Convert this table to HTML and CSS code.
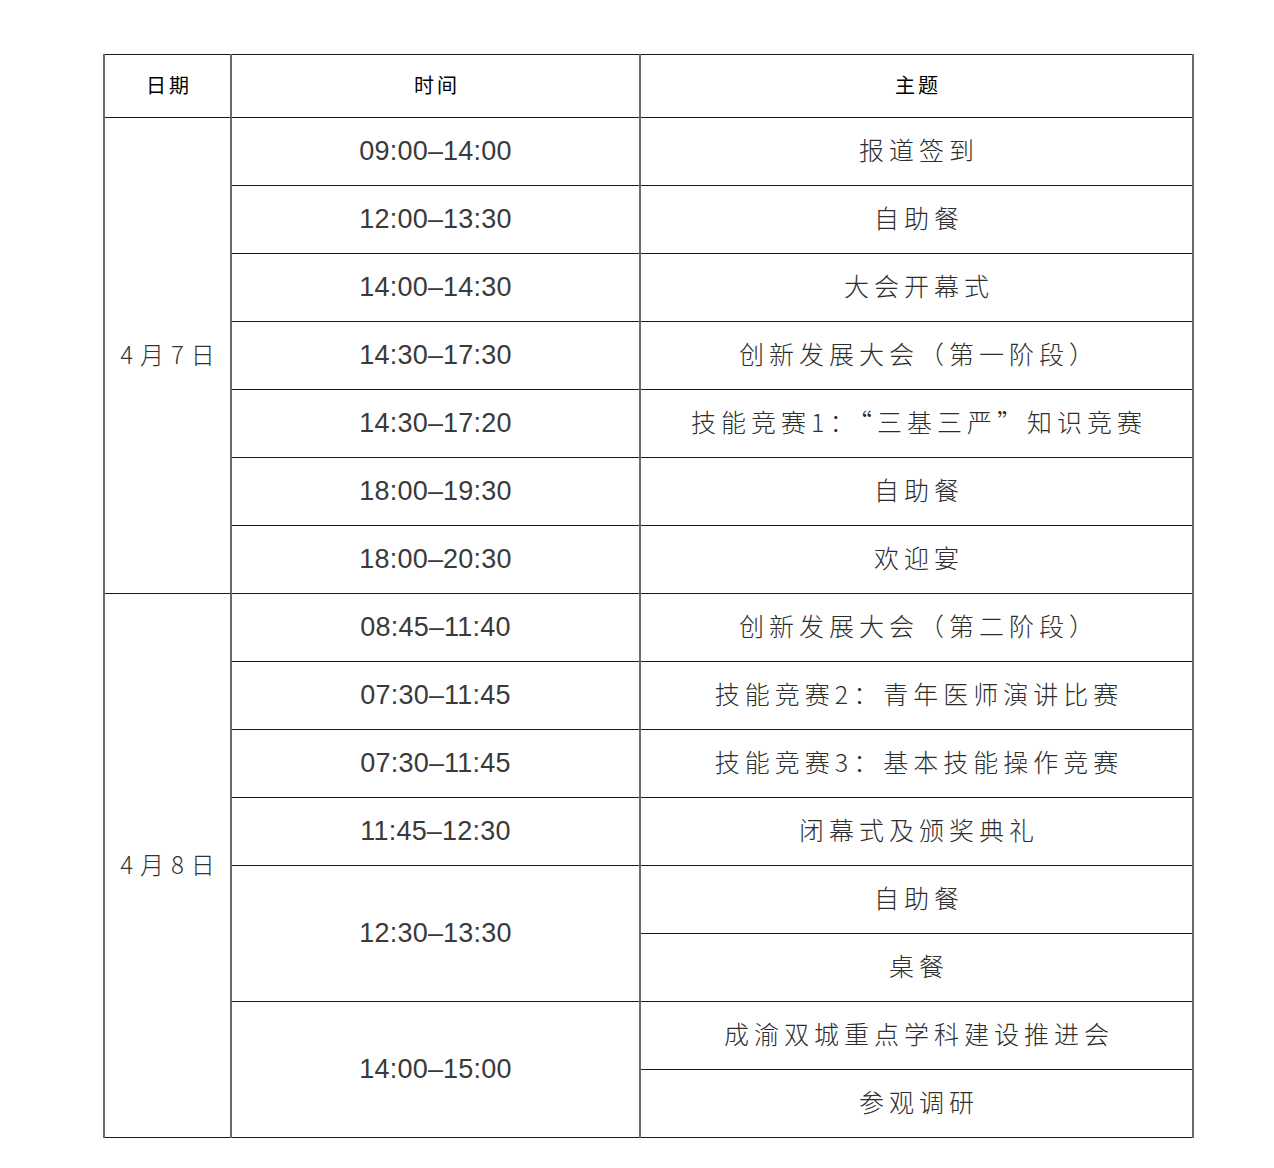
FILE: index.html
```html
<!DOCTYPE html>
<html lang="zh-CN">
<head>
<meta charset="utf-8">
<title>日程安排</title>
<link rel="stylesheet" href="styles.css">
</head>
<body>
<table class="schedule">
  <colgroup>
    <col class="c-date">
    <col class="c-time">
    <col class="c-topic">
  </colgroup>
  <thead>
    <tr class="head">
      <th>日期</th>
      <th>时间</th>
      <th>主题</th>
    </tr>
  </thead>
  <tbody>
    <tr>
      <td class="date" rowspan="7">4月7日</td>
      <td class="time">09:00–14:00</td>
      <td class="topic">报道签到</td>
    </tr>
    <tr><td class="time">12:00–13:30</td><td class="topic">自助餐</td></tr>
    <tr><td class="time">14:00–14:30</td><td class="topic">大会开幕式</td></tr>
    <tr><td class="time">14:30–17:30</td><td class="topic">创新发展大会（第一阶段）</td></tr>
    <tr><td class="time">14:30–17:20</td><td class="topic">技能竞赛1：“三基三严”知识竞赛</td></tr>
    <tr><td class="time">18:00–19:30</td><td class="topic">自助餐</td></tr>
    <tr><td class="time">18:00–20:30</td><td class="topic">欢迎宴</td></tr>
    <tr>
      <td class="date" rowspan="8">4月8日</td>
      <td class="time">08:45–11:40</td>
      <td class="topic">创新发展大会（第二阶段）</td>
    </tr>
    <tr><td class="time">07:30–11:45</td><td class="topic">技能竞赛2：青年医师演讲比赛</td></tr>
    <tr><td class="time">07:30–11:45</td><td class="topic">技能竞赛3：基本技能操作竞赛</td></tr>
    <tr><td class="time">11:45–12:30</td><td class="topic">闭幕式及颁奖典礼</td></tr>
    <tr><td class="time" rowspan="2">12:30–13:30</td><td class="topic">自助餐</td></tr>
    <tr><td class="topic">桌餐</td></tr>
    <tr><td class="time" rowspan="2">14:00–15:00</td><td class="topic">成渝双城重点学科建设推进会</td></tr>
    <tr><td class="topic">参观调研</td></tr>
  </tbody>
</table>
</body>
</html>
```
FILE: styles.css
```css
html, body {
  margin: 0;
  padding: 0;
  background: #ffffff;
}

body {
  padding: 54px 0 0 103px;
  font-family: "Noto Sans CJK SC", "Liberation Sans", sans-serif;
  color: #2a2a2a;
}

.schedule {
  border-collapse: collapse;
  table-layout: fixed;
  width: 1089px;
}

.c-date { width: 127px; }
.c-time { width: 409px; }
.c-topic { width: 553px; }

.schedule th,
.schedule td {
  border-top: 1px solid #1a1a1a;
  border-bottom: 1px solid #1a1a1a;
  border-left: 2px solid #6a6a6a;
  border-right: 2px solid #6a6a6a;
  text-align: center;
  vertical-align: middle;
  padding: 0;
  height: 68px;
  box-sizing: border-box;
}

.head th {
  height: 63px;
  font-size: 20px;
  font-weight: 400;
  letter-spacing: 3px;
  padding: 0 0 3px 3px;
  color: #000;
}

.date {
  font-size: 24px;
  font-weight: 300;
  letter-spacing: 7px;
  padding: 0 0 4px 7px !important;
  color: #333;
}

.time {
  font-family: "Liberation Sans", "Noto Sans CJK SC", sans-serif;
  font-size: 27px;
  color: #3a3a3a;
  letter-spacing: 0.2px;
}

.topic {
  font-size: 25px;
  font-weight: 300;
  letter-spacing: 5px;
  padding: 0 0 5px 5px !important;
  color: #2e2e2e;
}
```
